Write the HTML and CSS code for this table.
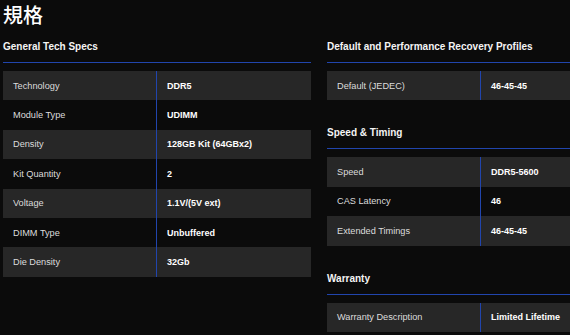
FILE: index.html
```html
<!DOCTYPE html>
<html lang="ja">
<head>
<meta charset="utf-8">
<title>規格</title>
<link rel="stylesheet" href="styles.css">
</head>
<body>
<h1 class="title">規格</h1>
<div class="columns">
  <div class="col">
    <section class="section">
      <h2 class="section-head">General Tech Specs</h2>
      <div class="table">
        <div class="row"><div class="label">Technology</div><div class="value">DDR5</div></div>
        <div class="row"><div class="label">Module Type</div><div class="value">UDIMM</div></div>
        <div class="row"><div class="label">Density</div><div class="value">128GB Kit (64GBx2)</div></div>
        <div class="row"><div class="label">Kit Quantity</div><div class="value">2</div></div>
        <div class="row"><div class="label">Voltage</div><div class="value">1.1V/(5V ext)</div></div>
        <div class="row"><div class="label">DIMM Type</div><div class="value">Unbuffered</div></div>
        <div class="row"><div class="label">Die Density</div><div class="value">32Gb</div></div>
      </div>
    </section>
  </div>
  <div class="col">
    <section class="section">
      <h2 class="section-head">Default and Performance Recovery Profiles</h2>
      <div class="table">
        <div class="row"><div class="label">Default (JEDEC)</div><div class="value">46-45-45</div></div>
      </div>
    </section>
    <section class="section">
      <h2 class="section-head">Speed &amp; Timing</h2>
      <div class="table">
        <div class="row"><div class="label">Speed</div><div class="value">DDR5-5600</div></div>
        <div class="row"><div class="label">CAS Latency</div><div class="value">46</div></div>
        <div class="row"><div class="label">Extended Timings</div><div class="value">46-45-45</div></div>
      </div>
    </section>
    <section class="section">
      <h2 class="section-head">Warranty</h2>
      <div class="table">
        <div class="row"><div class="label">Warranty Description</div><div class="value">Limited Lifetime</div></div>
      </div>
    </section>
  </div>
</div>
</body>
</html>
```

FILE: styles.css
```css
html, body {
  margin: 0;
  padding: 0;
  background: #0b0b0b;
  overflow: hidden;
}
body {
  padding: 0 3px;
  color: #ffffff;
  font-family: "Liberation Sans", Arial, "Noto Sans CJK JP", sans-serif;
}
.title {
  margin: 0;
  padding-top: 1px;
  font-family: "Noto Sans CJK JP", "Noto Sans CJK SC", sans-serif;
  font-size: 20px;
  line-height: 27px;
  font-weight: 500;
  color: #ffffff;
}
.columns {
  display: grid;
  grid-template-columns: 308px 308px;
  column-gap: 16px;
  margin-top: 12px;
  width: 632px;
}
.col {
  display: flex;
  flex-direction: column;
  gap: 26px;
}
.section-head {
  margin: 0 0 8px;
  font-size: 10px;
  line-height: 14px;
  font-weight: 700;
  padding-bottom: 8px;
  border-bottom: 1px solid #2145ad;
  color: #f4f4f4;
}
.table {
  display: flex;
  flex-direction: column;
}
.row {
  display: grid;
  grid-template-columns: 153px 1fr;
  height: 29.4px;
  align-items: stretch;
  font-size: 9.2px;
}
.row:nth-child(odd) {
  background: #272727;
}
.label {
  display: flex;
  align-items: center;
  padding-left: 10px;
  color: #dcdcdc;
}
.value {
  display: flex;
  align-items: center;
  padding-left: 10px;
  border-left: 1px solid #2145ad;
  font-weight: 700;
  font-size: 9px;
  color: #ffffff;
}
```
